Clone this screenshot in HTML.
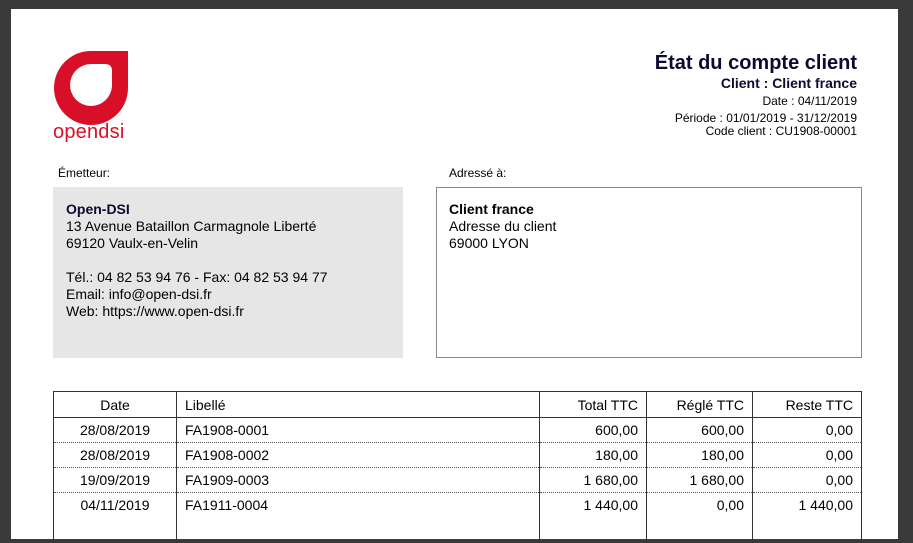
<!DOCTYPE html>
<html><head><meta charset="utf-8"><style>
*{margin:0;padding:0;box-sizing:border-box}
body{width:913px;height:527px;background:#3a3a3a;position:relative;overflow:hidden;font-family:"Liberation Sans",Arial,sans-serif;color:#000}
#page{position:absolute;left:11px;top:9px;width:887px;height:530px;background:#fff}
.a{position:absolute;white-space:nowrap}
.r{text-align:right}
table{position:absolute;left:53px;top:391px;width:809px;border-collapse:collapse;font-size:14px}
td,th{font-weight:normal;height:25px;padding:0 8px;border-left:1px solid #333;border-right:1px solid #333}
th{border-top:1px solid #333;border-bottom:1px solid #333;height:26px}
tr.d td{border-bottom:1px dotted #555}
.c{text-align:center}.rt{text-align:right}.l{text-align:left}
</style></head><body>
<div id="page"></div>
<svg class="a" style="left:53px;top:51px" width="76" height="74" viewBox="0 0 76 74">
<path fill-rule="evenodd" fill="#d81027" d="M37 0 H75 V37 A37 37 0 1 1 37 0 Z M38 13 H52 Q59 13 59 20 V35 A21 21 0 1 1 38 13 Z"/>
</svg>
<div class="a" style="left:53px;top:121px;font-size:20px;color:#d81027;letter-spacing:0.2px">opendsi</div>
<div class="a r" style="right:56px;top:52px;font-size:20px;font-weight:bold;color:#0a0a30">État du compte client</div>
<div class="a r" style="right:56px;top:75px;font-size:14px;font-weight:bold;color:#0a0a30">Client : Client france</div>
<div class="a r" style="right:56px;top:94px;font-size:12px">Date : 04/11/2019</div>
<div class="a r" style="right:56px;top:111px;font-size:12px">Période : 01/01/2019 - 31/12/2019</div>
<div class="a r" style="right:56px;top:124px;font-size:12px">Code client : CU1908-00001</div>
<div class="a" style="left:58px;top:166px;font-size:12px">Émetteur:</div>
<div class="a" style="left:449px;top:166px;font-size:12px">Adressé à:</div>
<div class="a" style="left:53px;top:187px;width:350px;height:171px;background:#e6e6e6;padding:14px 13px;font-size:14px;line-height:17px">
<b style="color:#0a0a30">Open-DSI</b><br>13 Avenue Bataillon Carmagnole Liberté<br>69120 Vaulx-en-Velin<br><br>Tél.: 04 82 53 94 76 - Fax: 04 82 53 94 77<br>Email: info@open-dsi.fr<br>Web: https://www.open-dsi.fr</div>
<div class="a" style="left:436px;top:187px;width:426px;height:171px;border:1px solid #888;padding:13px 12px;font-size:14px;line-height:17px">
<b>Client france</b><br>Adresse du client<br>69000 LYON</div>
<table>
<tr><th class="c" style="width:123px">Date</th><th class="l" style="width:363px">Libellé</th><th class="rt" style="width:107px">Total TTC</th><th class="rt" style="width:106px">Réglé TTC</th><th class="rt">Reste TTC</th></tr>
<tr class="d"><td class="c">28/08/2019</td><td>FA1908-0001</td><td class="rt">600,00</td><td class="rt">600,00</td><td class="rt">0,00</td></tr>
<tr class="d"><td class="c">28/08/2019</td><td>FA1908-0002</td><td class="rt">180,00</td><td class="rt">180,00</td><td class="rt">0,00</td></tr>
<tr class="d"><td class="c">19/09/2019</td><td>FA1909-0003</td><td class="rt">1 680,00</td><td class="rt">1 680,00</td><td class="rt">0,00</td></tr>
<tr><td class="c">04/11/2019</td><td>FA1911-0004</td><td class="rt">1 440,00</td><td class="rt">0,00</td><td class="rt">1 440,00</td></tr>
<tr><td></td><td></td><td></td><td></td><td></td></tr>
</table>
</body></html>
